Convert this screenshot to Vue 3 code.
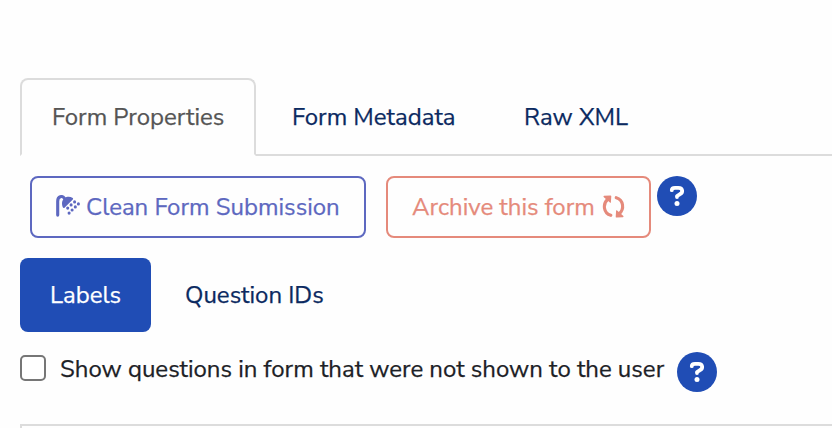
<script setup>
import { ref } from 'vue'

const tabs = [
  { id: 'properties', label: 'Form Properties' },
  { id: 'metadata', label: 'Form Metadata' },
  { id: 'xml', label: 'Raw XML' },
]
const activeTab = ref('properties')
const display = ref('labels')
const showSkipped = ref(false)
</script>

<template>
  <div class="form-data">
    <nav class="tabs">
      <a
        v-for="tab in tabs"
        :key="tab.id"
        class="tab"
        :class="[tab.id, { active: activeTab === tab.id }]"
        @click="activeTab = tab.id"
      ><span>{{ tab.label }}</span></a>
    </nav>

    <div class="actions">
      <button type="button" class="btn btn-clean">
        <svg class="icon" viewBox="0 0 24 24">
          <path d="M1.7 20.1V6.2C1.7 1.2 6.4 .3 8.4 3.3" fill="none" stroke="currentColor" stroke-width="3.1" stroke-linecap="round" />
          <path d="M6.8 12.2C5.3 8.5 6.1 4.9 8.6 3.1C10.9 1.3 14 1.2 16.8 3.1Q17.5 3.8 16.8 4.5L8.5 12.7Q7.5 13.5 6.8 12.2Z" fill="currentColor" />
          <g fill="currentColor">
            <circle cx="18.6" cy="6.9" r="1.55" />
            <circle cx="22.4" cy="8.9" r="1.55" />
            <circle cx="15.1" cy="9.9" r="1.55" />
            <circle cx="19.3" cy="11.9" r="1.55" />
            <circle cx="11.7" cy="13.1" r="1.55" />
            <circle cx="16.1" cy="15" r="1.55" />
            <circle cx="13.1" cy="18.1" r="1.55" />
          </g>
        </svg>
        <span>Clean Form Submission</span>
      </button>
      <button type="button" class="btn btn-archive">
        <span>Archive this form</span>
        <svg class="icon" viewBox="0 0 24 24">
          <g fill="none" stroke="currentColor" stroke-width="3.1" stroke-linecap="round">
            <path d="M5.8 4.2C.4 8.8 1.4 18.2 8.8 20.3" />
            <path d="M17.2 18.8C22.6 14.2 21.6 4.8 14.2 2.7" />
          </g>
          <path d="M2 .8L8.4 .4Q9.3 .4 9.3 1.3L8.9 7.4Q8.6 8.2 7.9 7.6L1.6 2Q1.2 1 2 .8ZM21 22.2L14.6 22.6Q13.7 22.6 13.7 21.7L14.1 15.6Q14.4 14.8 15.1 15.4L21.4 21Q21.8 22 21 22.2Z" fill="currentColor" />
        </svg>
      </button>
      <svg class="help" viewBox="0 0 40 40">
        <circle cx="20" cy="20" r="20" />
        <path d="M14.8 14.2C14.8 12.5 16 11.8 18 11.8H21.3C26.1 11.8 26.3 16.6 22.7 18.3L20 20V21.1" />
        <circle class="dot" cx="20" cy="27.6" r="2.5" />
      </svg>
    </div>

    <div class="pills">
      <a class="pill labels" :class="{ active: display === 'labels' }" @click="display = 'labels'"><span>Labels</span></a>
      <a class="pill ids" :class="{ active: display === 'ids' }" @click="display = 'ids'"><span>Question IDs</span></a>
    </div>

    <div class="option">
      <label>
        <input v-model="showSkipped" type="checkbox" />
        <span>Show questions in form that were not shown to the user</span>
      </label>
      <svg class="help" viewBox="0 0 40 40">
        <circle cx="20" cy="20" r="20" />
        <path d="M14.8 14.2C14.8 12.5 16 11.8 18 11.8H21.3C26.1 11.8 26.3 16.6 22.7 18.3L20 20V21.1" />
        <circle class="dot" cx="20" cy="27.6" r="2.5" />
      </svg>
    </div>

    <div class="panel"></div>
  </div>
</template>

<style>
body {
  margin: 0;
  background: #fefefe;
}
</style>

<style scoped>
.form-data {
  box-sizing: border-box;
  height: 428px;
  padding: 78px 0 0 20px;
  overflow: hidden;
  font-family: "Nunito Sans", Lato, sans-serif;
  font-size: 24px;
  line-height: 36px;
  color: #1c2126;
  white-space: nowrap;
  -webkit-text-stroke: 0.25px;
}

.tabs {
  display: flex;
  gap: 4px;
  height: 78px;
  box-shadow: inset 0 -2px #dcdcdc;
}

.tab {
  box-sizing: border-box;
  padding: 19px 30px 0;
  border: 2px solid transparent;
  border-bottom: 0;
  border-radius: 8px 8px 0 0;
  color: #0b2a61;
  cursor: pointer;
}

.tab.properties {
  width: 236px;
}

.tab.metadata {
  width: 228px;
}

.tab.active {
  border-color: #dcdcdc;
  border-bottom: 2px solid #fefefe;
  background: #fefefe;
  color: #555;
}

.actions {
  display: flex;
  align-items: flex-start;
  margin: 20px 0 0 10px;
}

.btn {
  box-sizing: border-box;
  display: flex;
  align-items: center;
  height: 62px;
  padding: 0 0 0 24px;
  border: 2px solid;
  border-radius: 8px;
  background: transparent;
  font: inherit;
  cursor: pointer;
}

.btn-clean {
  width: 336px;
  gap: 6px;
  color: #5d68c0;
}

.btn-archive {
  width: 265px;
  margin-left: 20px;
  gap: 7px;
  color: #e58a7b;
}

.icon {
  flex: none;
  width: 24px;
  height: 24px;
}

.help {
  flex: none;
  width: 40px;
  height: 40px;
  margin-left: 6px;
  fill: #204db5;
}

.help path {
  fill: none;
  stroke: #fff;
  stroke-width: 3.8;
  stroke-linecap: round;
  stroke-linejoin: round;
}

.help .dot {
  fill: #fff;
}

.pills {
  display: flex;
  gap: 4px;
  margin-top: 20px;
}

.pill {
  box-sizing: border-box;
  height: 74px;
  padding: 19px 30px;
  border-radius: 8px;
  color: #0b2a61;
  cursor: pointer;
}

.pill.labels {
  width: 131px;
}

.pill.active {
  background: #204db5;
  color: #fff;
}

.option {
  display: flex;
  align-items: flex-start;
  margin-top: 19px;
}

.option label {
  display: flex;
  align-items: flex-start;
  width: 650.5px;
  gap: 14px;
}

.option input {
  appearance: none;
  box-sizing: border-box;
  flex: none;
  width: 26px;
  height: 26px;
  margin: 4px 0 0;
  border: 2px solid #767676;
  border-radius: 5px;
  background: #fff;
}

.option input:checked {
  background: #204db5;
}

.option .help {
  margin-top: 1px;
}

.panel {
  height: 40px;
  margin-top: 32px;
  border: 2px solid #dcdcdc;
  border-right: 0;
}
</style>
